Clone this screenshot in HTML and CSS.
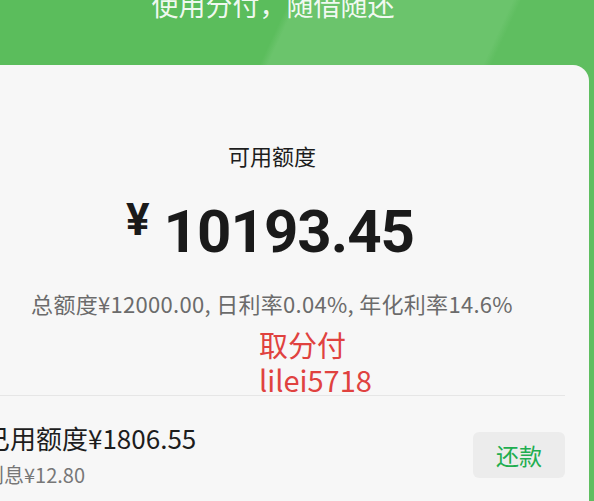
FILE: index.html
```html
<!DOCTYPE html>
<html lang="zh">

<head>
    <meta charset="UTF-8">
    <meta name="viewport" content="width=device-width, initial-scale=1.0">
    <title>分付</title>
    <link rel="stylesheet" href="styles.css">
</head>

<body>
    <div class="page">
        <div class="banner">使用分付，随借随还</div>

        <div class="card">
            <div class="quota">
                <div class="quota-label">可用额度</div>
                <div class="quota-amount"><span class="yen">¥</span>10193.45</div>
                <div class="quota-info">总额度¥12000.00, 日利率0.04%, 年化利率14.6%</div>
            </div>

            <div class="watermark">取分付<br>lilei5718</div>

            <div class="divider"></div>

            <div class="used-row">
                <div class="used-text">
                    <div class="used-amount">已用额度¥1806.55</div>
                    <div class="used-interest">利息¥12.80</div>
                </div>
                <button class="repay-btn">还款</button>
            </div>
        </div>
    </div>
</body>

</html>
```

FILE: styles.css
```css
html,
body {
    margin: 0;
    padding: 0;
    height: 501px;
    overflow: hidden;
}

body {
    font-family: 'Noto Sans CJK SC', 'Noto Sans', sans-serif;
    background-color: #5cbb5d;
}

.page {
    display: flex;
    flex-direction: column;
    height: 501px;
    overflow: hidden;
    background: linear-gradient(115deg, #5bbd5c 0%, #5bbd5c 35%, #6bc46c 36%, #6bc46c 62%, #5fbe60 63%, #5fbe60 100%);
}

.banner {
    flex: 0 0 65px;
    text-align: center;
    padding-right: 48px;
    font-size: 27px;
    line-height: 10px;
    color: rgba(255, 255, 255, 0.92);
}

.card {
    position: relative;
    flex: 1;
    margin-left: -45px;
    width: 634px;
    background-color: #f7f7f7;
    border-radius: 16px 16px 0 0;
}

.quota {
    text-align: center;
    padding-top: 75px;
}

.quota-label {
    font-size: 22px;
    line-height: 30px;
    color: #1d1d1d;
}

.quota-amount {
    margin-top: 17px;
    font-family: Roboto, 'Liberation Sans', sans-serif;
    font-weight: 700;
    font-size: 60px;
    line-height: 66px;
    letter-spacing: -1px;
    color: #1a1a1a;
    padding-right: 4px;
}

.yen {
    font-size: 44px;
    vertical-align: 17px;
    margin-right: 15px;
}

.quota-info {
    margin-top: 24px;
    font-size: 22px;
    line-height: 28px;
    letter-spacing: 0.3px;
    color: #6b6b6b;
}

.watermark {
    position: absolute;
    left: 304px;
    top: 262px;
    font-size: 29px;
    line-height: 35px;
    color: #e0423f;
}

.divider {
    margin: 78px 24px 0 45px;
    height: 1px;
    background-color: #e6e6e6;
}

.used-row {
    display: flex;
    align-items: center;
    justify-content: space-between;
    padding: 26px 24px 0 29px;
}

.used-amount {
    font-size: 26px;
    line-height: 32px;
    color: #1d1d1d;
}

.used-interest {
    margin-top: 8px;
    font-size: 20px;
    line-height: 26px;
    color: #777;
}

.repay-btn {
    width: 92px;
    height: 46px;
    border: none;
    border-radius: 6px;
    background-color: #ececec;
    color: #1fae50;
    font-family: inherit;
    font-size: 23px;
    cursor: pointer;
}
```
